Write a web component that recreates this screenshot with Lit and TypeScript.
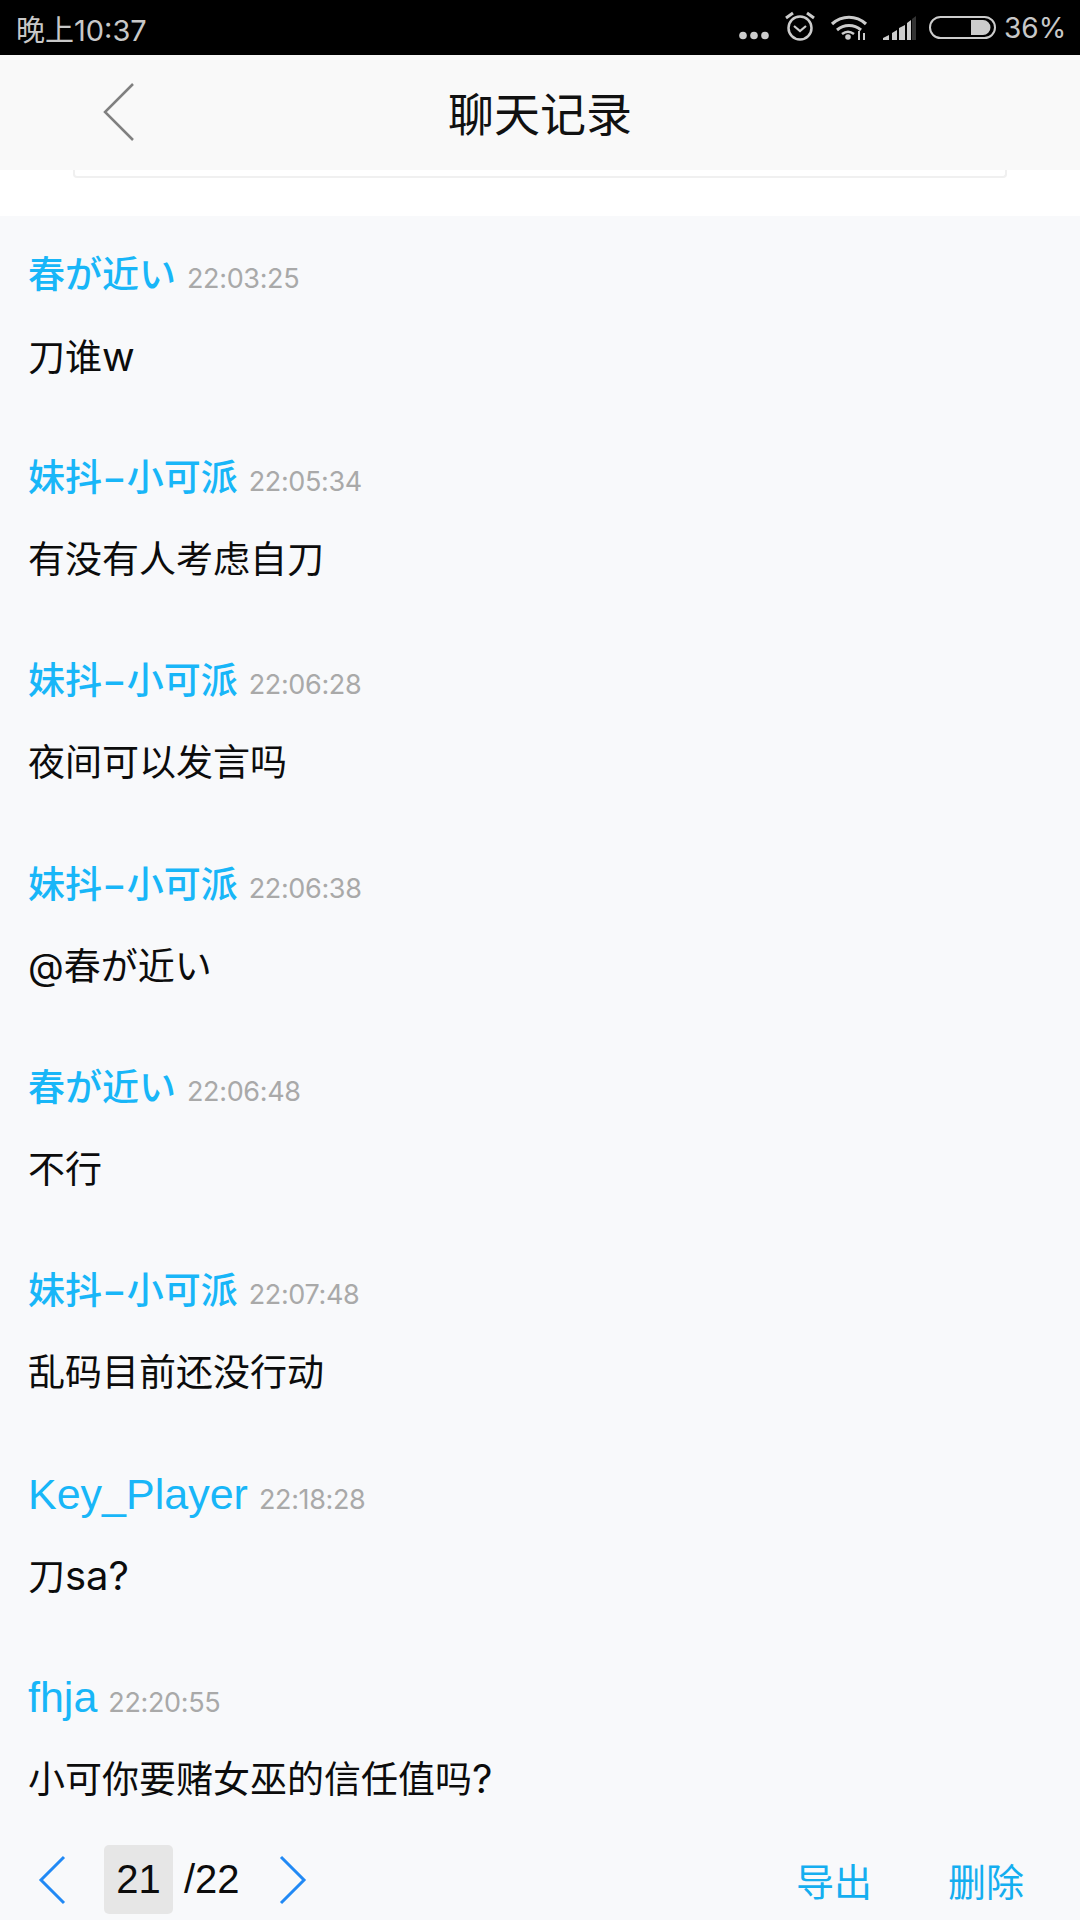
import { LitElement, html, css, svg } from 'lit'
import { customElement } from 'lit/decorators.js'

const records = [
  { name: '春が近い', time: '22:03:25', text: '刀谁w' },
  { name: '妹抖−小可派', time: '22:05:34', text: '有没有人考虑自刀' },
  { name: '妹抖−小可派', time: '22:06:28', text: '夜间可以发言吗' },
  { name: '妹抖−小可派', time: '22:06:38', text: '@春が近い' },
  { name: '春が近い', time: '22:06:48', text: '不行' },
  { name: '妹抖−小可派', time: '22:07:48', text: '乱码目前还没行动' },
  { name: 'Key_Player', time: '22:18:28', text: '刀sa?' },
  { name: 'fhja', time: '22:20:55', text: '小可你要赌女巫的信任值吗?' },
]

// latin letters run larger than the CJK ones in the original
const runs = (text: string) =>
  text.split(/([A-Za-z_?]+)/).map((part, i) =>
    i % 2 ? html`<span class="latin">${part}</span>` : part
  )

const chevron = (w: number, h: number, d: string, color: string, sw: number) => html`
  <svg width=${w} height=${h} viewBox="0 0 ${w} ${h}" fill="none">
    ${svg`<path d=${d} stroke=${color} stroke-width=${sw} />`}
  </svg>
`

@customElement('app-root')
export class AppRoot extends LitElement {
  static styles = css`
    :host {
      display: flex;
      flex-direction: column;
      width: 1080px;
      height: 1920px;
      overflow: hidden;
      background: #f8f9fb;
      font-family: Inter, "Noto Sans CJK SC", sans-serif;
    }

    .status {
      flex: none;
      height: 55px;
      background: #000;
      color: #c8c8c8;
      display: flex;
      align-items: center;
      justify-content: space-between;
      padding: 0 15px 0 16px;
      font-size: 29px;
    }
    .status-right { display: flex; align-items: center; gap: 7px; }
    .status-right svg { display: block; }
    .percent { width: 61px; font-size: 28px; white-space: nowrap; }

    .nav {
      flex: none;
      height: 115px;
      padding-bottom: 4px;
      box-sizing: border-box;
      background: #f9f9f9;
      display: flex;
      align-items: center;
      justify-content: center;
      position: relative;
      font-size: 46px;
      color: #111;
    }
    .back { position: absolute; left: 103px; top: 27px; }
    .back svg { display: block; }

    .gap {
      flex: none;
      height: 46px;
      background: #fff;
      padding: 0 73px;
    }
    .gap div {
      height: 6px;
      border: 2px solid #f0f0f0;
      border-top: none;
      border-radius: 0 0 4px 4px;
    }

    .list {
      flex: 1;
      padding: 0 28px;
      overflow: hidden;
    }
    .record { height: 203.2px; padding-top: 33px; box-sizing: border-box; }
    .head { display: flex; align-items: baseline; gap: 11px; height: 52px; line-height: 52px; }
    .name { font-size: 37px; font-weight: 500; color: #18b6f8; }
    .name .latin { font-family: "Liberation Sans", sans-serif; font-size: 43px; font-weight: 400; }
    .time { font-size: 27px; letter-spacing: -0.35px; color: #a9a9a9; }
    .text { margin-top: 35px; font-size: 37px; line-height: 42px; color: #0c0c0c; }
    .text .latin { font-size: 40px; }

    .footer {
      flex: none;
      height: 92px;
      display: flex;
      align-items: center;
      padding: 11px 56px 0 38px;
      box-sizing: border-box;
      font-family: "Liberation Sans", sans-serif;
      font-size: 40px;
      color: #0c0c0c;
    }
    .page {
      width: 69px;
      height: 69px;
      margin-left: 38px;
      border-radius: 5px;
      background: #e6e6e6;
      display: flex;
      align-items: center;
      justify-content: center;
    }
    .total { margin-left: 11px; margin-right: 39px; }
    .spacer { flex: 1; }
    .action { font-family: "Noto Sans CJK SC", sans-serif; font-size: 38px; color: #14aef0; margin-left: 76px; }
    .footer svg { display: block; }
  `

  render() {
    return html`
      <div class="status">
        <span>晚上10:37</span>
        <div class="status-right">
          <svg width="262" height="55" viewBox="735 0 262 55" fill="none">
            <circle cx="743" cy="35.5" r="3.8" fill="#ccc"/>
            <circle cx="754" cy="35.5" r="3.8" fill="#ccc"/>
            <circle cx="765" cy="35.5" r="3.8" fill="#ccc"/>
            <circle cx="800" cy="28" r="11.5" stroke="#ccc" stroke-width="2.5"/>
            <path d="M794 26l6 5 6-5" stroke="#ccc" stroke-width="2.2"/>
            <path d="M786 18l7-5M814 18l-7-5" stroke="#ccc" stroke-width="3"/>
            <path d="M832 24c10-9 24-9 34 0" stroke="#ccc" stroke-width="3.2"/>
            <path d="M837 30c7-6 17-6 24 0" stroke="#ccc" stroke-width="3"/>
            <path d="M842 34c4-3 8-3 12 0" stroke="#ccc" stroke-width="2.6"/>
            <circle cx="848" cy="37" r="2.8" fill="#ccc"/>
            <path d="M859 31v9M864 33v7" stroke="#ccc" stroke-width="2"/>
            <path d="M883 40v-2l6-3v5zM892 40v-7l5-3v10zM899 40v-12l6-3v15zM907 40v-17l4-3v20z" fill="#ccc"/>
            <path d="M912 40v-21l4-3v24z" fill="#333"/>
            <rect x="930" y="17" width="65" height="21" rx="10.5" stroke="#ccc" stroke-width="2"/>
            <path d="M971 20h12a7.5 7.5 0 0 1 0 15H971z" fill="#ccc"/>
          </svg>
          <span class="percent">36%</span>
        </div>
      </div>

      <div class="nav">
        <span class="back">${chevron(32, 60, 'M30 2 L2 30 L30 58', '#808080', 2.5)}</span>
        聊天记录
      </div>

      <div class="gap"><div></div></div>

      <div class="list">
        ${records.map(r => html`
          <div class="record">
            <div class="head">
              <span class="name">${runs(r.name)}</span>
              <span class="time">${r.time}</span>
            </div>
            <div class="text">${runs(r.text)}</div>
          </div>
        `)}
      </div>

      <div class="footer">
        ${chevron(28, 50, 'M26 2 L3 25 L26 48', '#2189f5', 3)}
        <div class="page">21</div>
        <span class="total">/22</span>
        ${chevron(28, 50, 'M2 2 L25 25 L2 48', '#2189f5', 3)}
        <span class="spacer"></span>
        <span class="action">导出</span>
        <span class="action">删除</span>
      </div>
    `
  }
}
